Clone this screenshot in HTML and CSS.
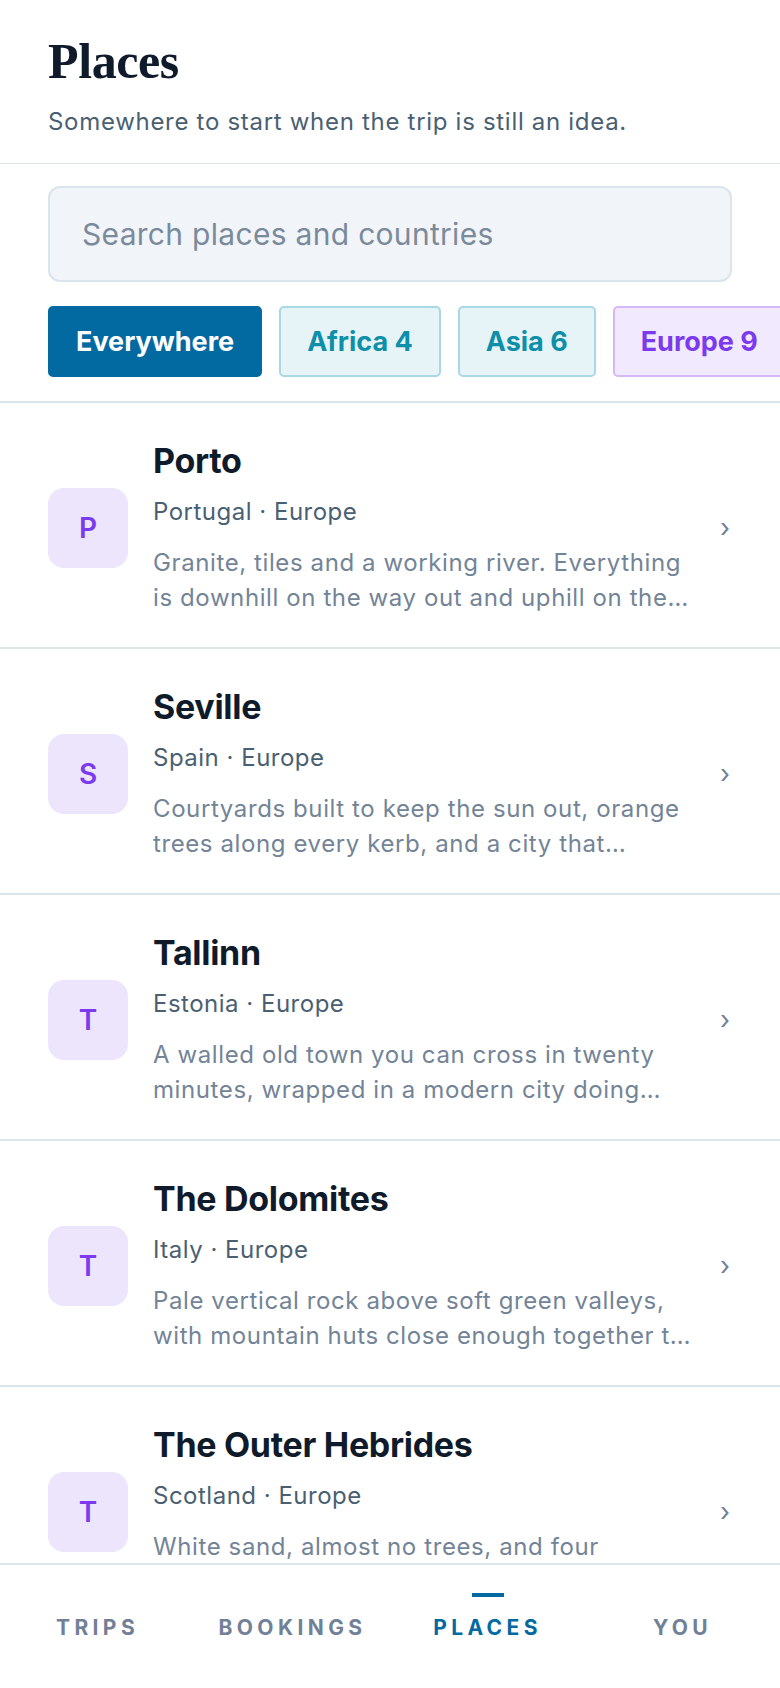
FILE: index.html
```html
<!DOCTYPE html>
<html lang="en">
<head>
  <meta charset="UTF-8" />
  <meta name="viewport" content="width=device-width, initial-scale=1.0"/>
  <title>Places</title>
  <link rel="stylesheet" href="styles.css">
</head>
<body>
  <div class="screen">
    <header class="page-head">
      <h1>Places</h1>
      <p class="lede">Somewhere to start when the trip is still an idea.</p>
    </header>

    <section class="filters">
      <input class="search" type="text" placeholder="Search places and countries" />
      <div class="chips">
        <button class="chip chip-active">Everywhere</button>
        <button class="chip chip-teal">Africa 4</button>
        <button class="chip chip-teal">Asia 6</button>
        <button class="chip chip-violet">Europe 9</button>
      </div>
    </section>

    <ul class="places">
      <li class="place">
        <div class="avatar">P</div>
        <div class="place-body">
          <h2>Porto</h2>
          <p class="meta">Portugal · Europe</p>
          <p class="desc">Granite, tiles and a working river. Everything is downhill on the way out and uphill on the way back.</p>
        </div>
        <span class="chev">›</span>
      </li>
      <li class="place">
        <div class="avatar">S</div>
        <div class="place-body">
          <h2>Seville</h2>
          <p class="meta">Spain · Europe</p>
          <p class="desc">Courtyards built to keep the sun out, orange trees along every kerb, and a city that doesn't eat before ten.</p>
        </div>
        <span class="chev">›</span>
      </li>
      <li class="place">
        <div class="avatar">T</div>
        <div class="place-body">
          <h2>Tallinn</h2>
          <p class="meta">Estonia · Europe</p>
          <p class="desc">A walled old town you can cross in twenty minutes, wrapped in a modern city doing something else entirely.</p>
        </div>
        <span class="chev">›</span>
      </li>
      <li class="place">
        <div class="avatar">T</div>
        <div class="place-body">
          <h2>The Dolomites</h2>
          <p class="meta">Italy · Europe</p>
          <p class="desc">Pale vertical rock above soft green valleys, with mountain huts close enough together to walk between.</p>
        </div>
        <span class="chev">›</span>
      </li>
      <li class="place">
        <div class="avatar">T</div>
        <div class="place-body">
          <h2>The Outer Hebrides</h2>
          <p class="meta">Scotland · Europe</p>
          <p class="desc">White sand, almost no trees, and four seasons in a single afternoon.</p>
        </div>
        <span class="chev">›</span>
      </li>
    </ul>

    <nav class="tabbar">
      <a class="tab">TRIPS</a>
      <a class="tab">BOOKINGS</a>
      <a class="tab tab-active">PLACES</a>
      <a class="tab">YOU</a>
    </nav>
  </div>
</body>
</html>
```

FILE: styles.css
```css
html, body {
  margin: 0;
  padding: 0;
  background: #fff;
  font-family: 'Inter', 'Noto Sans', sans-serif;
  color: #0f1b2a;
}

.screen {
  height: 1688px;
  display: flex;
  flex-direction: column;
  overflow: hidden;
}

.page-head {
  padding: 34px 48px 26px;
  border-bottom: 1px solid #dde5ec;
}

h1 {
  margin: 0;
  font-family: 'Liberation Serif', serif;
  font-weight: 700;
  font-size: 50px;
  line-height: 55px;
  letter-spacing: -0.4px;
  color: #0f1b2a;
}

.lede {
  margin: 18px 0 0;
  font-size: 24px;
  line-height: 30px;
  letter-spacing: 0.7px;
  color: #4a5f72;
}

.filters {
  padding: 22px 0 24px 48px;
  border-bottom: 2px solid #dde5ec;
  display: flex;
  flex-direction: column;
  gap: 24px;
}

.search {
  box-sizing: border-box;
  width: 684px;
  height: 96px;
  margin: 0;
  padding: 0 32px;
  border: 2px solid #dbe4ec;
  border-radius: 12px;
  background: #f1f5f9;
  font-family: inherit;
  font-size: 30px;
  letter-spacing: 0.3px;
  color: #0f1b2a;
  outline: none;
}

.search::placeholder {
  color: #7b8a9a;
}

.chips {
  display: flex;
  gap: 17px;
  overflow: hidden;
}

.chip {
  flex: none;
  height: 71px;
  padding: 0 26px;
  border: 2px solid transparent;
  border-radius: 5px;
  font-family: inherit;
  font-size: 27px;
  font-weight: 700;
}

.chip-active {
  background: #0369a1;
  border-color: #0369a1;
  color: #fff;
}

.chip-teal {
  background: #e6f4f8;
  border-color: #a8d8e4;
  color: #0e8fa8;
}

.chip-violet {
  background: #f1e9fd;
  border-color: #d5b8f7;
  color: #7c3aed;
}

.places {
  flex: 1;
  margin: 0;
  padding: 0;
  list-style: none;
  overflow: hidden;
}

.place {
  display: flex;
  align-items: center;
  gap: 25px;
  padding: 37px 48px 32px;
  border-bottom: 2px solid #dde5ec;
}

.avatar {
  flex: none;
  width: 80px;
  height: 80px;
  border-radius: 16px;
  background: #ede5fc;
  color: #7c3aed;
  display: flex;
  align-items: center;
  justify-content: center;
  font-size: 28px;
  font-weight: 600;
}

.place-body {
  flex: 1;
  min-width: 0;
}

.place h2 {
  margin: 0;
  font-size: 34px;
  line-height: 42px;
  font-weight: 700;
  letter-spacing: -0.3px;
  color: #0f1b2a;
}

.meta {
  margin: 14px 0 0;
  font-size: 24px;
  line-height: 32px;
  letter-spacing: 0.5px;
  color: #4a5f72;
}

.desc {
  margin: 17px 0 0;
  font-size: 24px;
  line-height: 35px;
  letter-spacing: 0.6px;
  color: #738497;
  display: -webkit-box;
  -webkit-line-clamp: 2;
  -webkit-box-orient: vertical;
  overflow: hidden;
}

.chev {
  flex: none;
  width: 14px;
  text-align: center;
  font-size: 26px;
  color: #718096;
}

.tabbar {
  flex: none;
  height: 125px;
  box-sizing: border-box;
  border-top: 2px solid #dde5ec;
  display: grid;
  grid-template-columns: repeat(4, 1fr);
  background: #fff;
}

.tab {
  display: flex;
  flex-direction: column;
  align-items: center;
  padding-top: 28px;
  font-size: 21px;
  font-weight: 700;
  letter-spacing: 4.4px;
  color: #718096;
}

.tab::before {
  content: "";
  width: 32px;
  height: 4px;
  margin-bottom: 18px;
  background: transparent;
}

.tab-active {
  color: #0369a1;
}

.tab-active::before {
  background: #0369a1;
}
```
